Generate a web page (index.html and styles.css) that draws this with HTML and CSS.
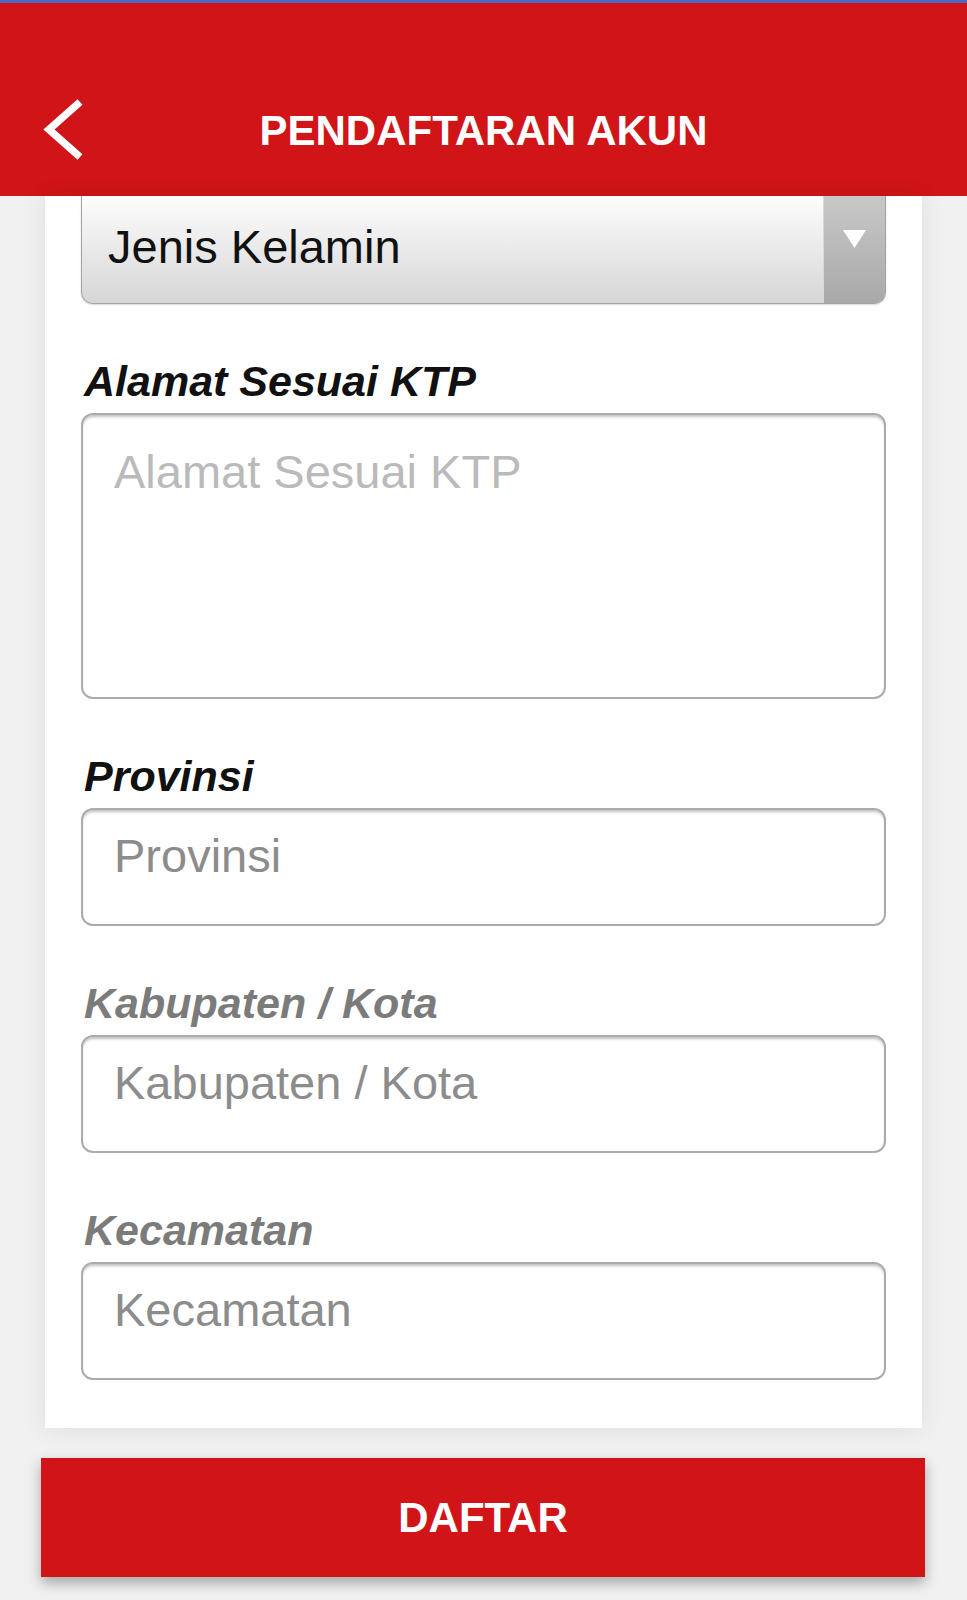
FILE: index.html
```html
<!DOCTYPE html>
<html lang="id">
<head>
    <meta charset="UTF-8">
    <meta name="viewport" content="width=device-width, initial-scale=1.0">
    <title>Pendaftaran Akun</title>
    <link rel="stylesheet" href="styles.css">
</head>
<body>
    <header class="topbar">
        <div class="topbar-inner">
            <button class="back" aria-label="Kembali">
                <svg width="44" height="64" viewBox="0 0 44 64">
                    <path d="M37 4 L6 31.5 L37 59" fill="none" stroke="#fff" stroke-width="7.5" />
                </svg>
            </button>
            <h1 class="title">PENDAFTARAN AKUN</h1>
            <span></span>
        </div>
    </header>

    <main class="form-card">
        <!-- dropdown, sebagian tertutup header -->
        <div class="select">
            <span class="select-value">Jenis Kelamin</span>
            <span class="select-arrow">
                <svg width="23" height="18" viewBox="0 0 23 18">
                    <polygon points="0,0 23,0 11.5,18" fill="#fff" />
                </svg>
            </span>
        </div>

        <label class="field-label">Alamat Sesuai KTP</label>
        <textarea class="field field-area" placeholder="Alamat Sesuai KTP"></textarea>

        <label class="field-label">Provinsi</label>
        <input class="field" type="text" placeholder="Provinsi">

        <label class="field-label muted">Kabupaten / Kota</label>
        <input class="field" type="text" placeholder="Kabupaten / Kota">

        <label class="field-label muted">Kecamatan</label>
        <input class="field" type="text" placeholder="Kecamatan">
    </main>

    <button class="submit">DAFTAR</button>
</body>
</html>
```

FILE: styles.css
```css
html {
    background-color: #f0f0f0;
}

body {
    margin: 0;
    padding-bottom: 23px;
    font-family: "Liberation Sans", Arial, sans-serif;
    background-color: #f0f0f0;
}

.topbar {
    height: 196px;
    box-sizing: border-box;
    border-top: 3px solid #4769c0;
    padding-top: 60px;
    background-color: #d01418;
}

.topbar-inner {
    display: grid;
    grid-template-columns: 1fr auto 1fr;
    align-items: center;
    height: 133px;
}

.back {
    justify-self: start;
    margin-left: 43px;
    padding: 0;
    border: none;
    background: none;
    display: flex;
}

.title {
    margin: 2px 0 0;
    color: white;
    font-size: 42px;
    font-weight: bold;
    line-height: 48px;
}

.form-card {
    margin: 0 45px;
    padding: 0 36px 48px;
    background: white;
    box-shadow: 0 0 22px rgba(0,0,0,0.08);
}

.select {
    display: flex;
    height: 108px;
    box-sizing: border-box;
    border: 1px solid #a3a3a3;
    border-top: none;
    border-radius: 0 0 12px 12px;
    overflow: hidden;
    background: linear-gradient(#fdfdfd, #d6d6d6);
    box-shadow: 0 1px 2px rgba(0,0,0,0.15);
}

.select-value {
    flex: 1;
    padding: 24px 0 0 26px;
    font-size: 47px;
    line-height: 54px;
    color: #111;
}

.select-arrow {
    width: 62px;
    display: flex;
    justify-content: center;
    align-items: flex-start;
    padding-top: 34px;
    box-sizing: border-box;
    background: linear-gradient(#c8c8c8, #a9a9a9);
    border-left: 1px solid #d9d9d9;
}

.field-label {
    display: block;
    margin: 53px 0 8px;
    padding-left: 3px;
    font-size: 43px;
    font-weight: bold;
    font-style: italic;
    line-height: 48px;
    color: #111;
}

.field-label.muted {
    color: #7b7b7b;
}

.field {
    display: block;
    width: 100%;
    height: 118px;
    box-sizing: border-box;
    margin: 0;
    padding: 19px 31px 43px;
    border: 2px solid #ababab;
    border-radius: 12px;
    box-shadow: inset 0 3px 3px -1px rgba(0,0,0,0.25);
    background: white;
    font-family: inherit;
    font-size: 47px;
    line-height: 52px;
    color: #111;
    outline: none;
}

.field::placeholder {
    color: #8c8c8c;
}

.field-area {
    height: 286px;
    padding-top: 31px;
    resize: none;
}

.field-area::placeholder {
    color: #bababa;
}

.submit {
    display: block;
    width: 884px;
    height: 119px;
    margin: 30px 0 0 41px;
    border: none;
    background-color: #d01418;
    color: white;
    font-family: inherit;
    font-size: 42px;
    font-weight: bold;
    box-shadow: 0 6px 12px rgba(0,0,0,0.3);
    cursor: pointer;
}
```
